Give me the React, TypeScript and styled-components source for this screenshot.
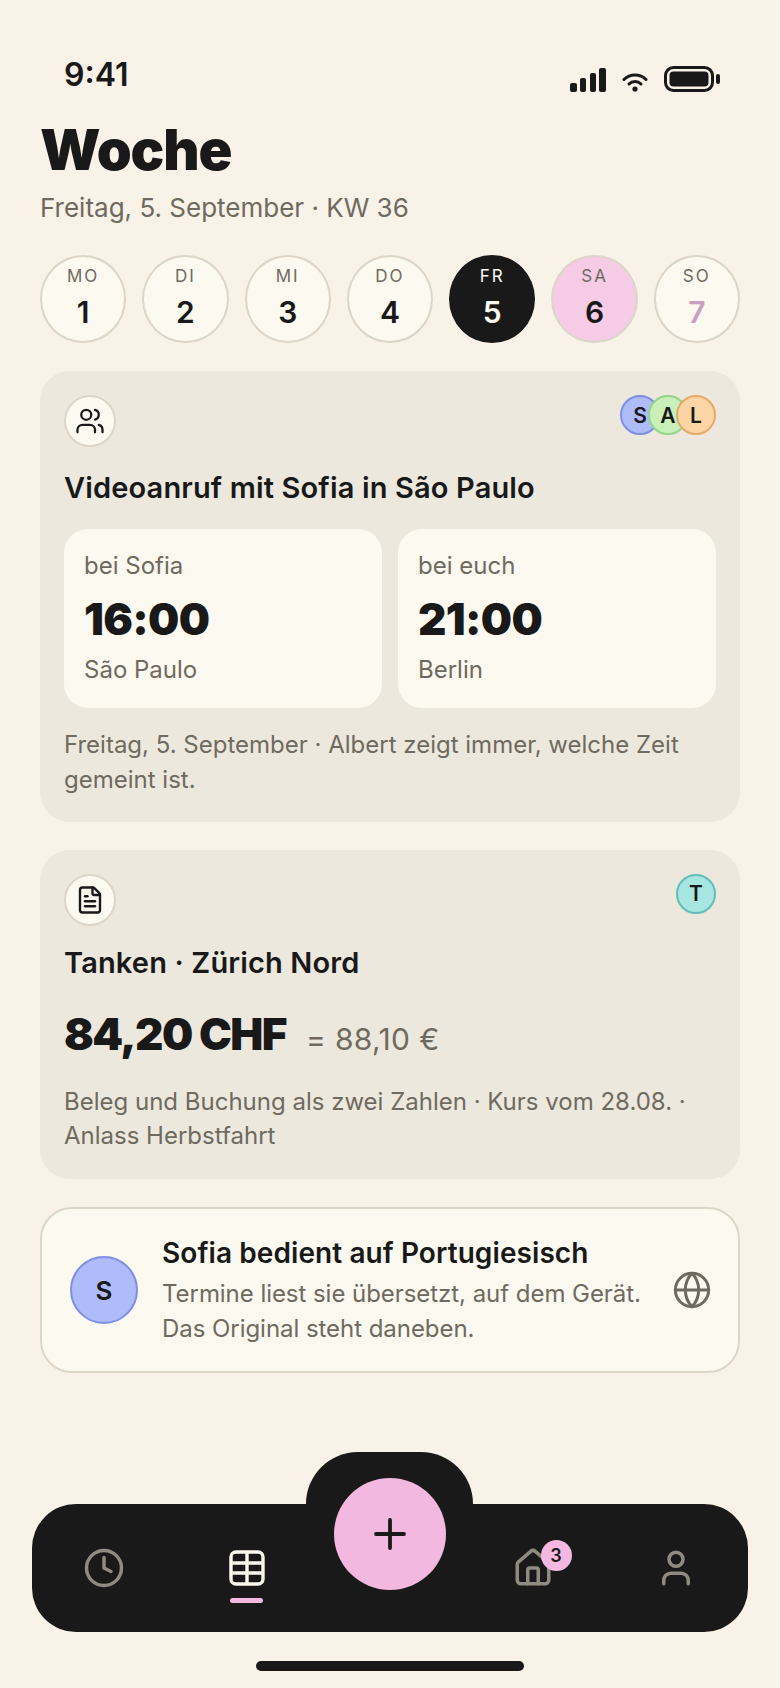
import React from "react";
import styled, { createGlobalStyle } from "styled-components";
import { Users, FileText, Globe, Clock, House, User, Plus } from "lucide-react";

const Global = createGlobalStyle`
  html, body { margin: 0; padding: 0; background: #f8f2e8; }
  * { box-sizing: border-box; }
  body { font-family: Inter, "Noto Sans", sans-serif; color: #191919; }
`;

const Page = styled.div`
  width: 780px;
  height: 1688px;
  background: #f8f2e8;
  display: flex;
  flex-direction: column;
  overflow: hidden;
`;

const StatusBar = styled.div`
  height: 118px;
  padding: 57px 60px 0 64px;
  display: flex;
  justify-content: space-between;
  align-items: flex-start;
`;

const Clocktime = styled.div`
  font-size: 32px;
  line-height: 36px;
  font-weight: 600;
`;

const StatusIcons = styled.div`
  display: flex;
  align-items: flex-end;
  gap: 16px;
  padding-top: 9px;
`;

const Content = styled.main`
  padding: 0 40px;
  display: flex;
  flex-direction: column;
`;

const Title = styled.h1`
  margin: 0;
  font-size: 56px;
  line-height: 64px;
  font-weight: 900;
  letter-spacing: -0.02em;
`;

const Subtitle = styled.div`
  margin-top: 9px;
  font-size: 26px;
  line-height: 34px;
  color: #6f6a60;
`;

const Week = styled.div`
  margin-top: 30px;
  display: grid;
  grid-template-columns: repeat(7, 1fr);
  gap: 16px;
`;

const dayBg = { plain: "#fbf9f0", today: "#191919", weekend: "#f5cbe6" };

const Day = styled.div<{ $kind: keyof typeof dayBg }>`
  height: 88px;
  border-radius: 50%;
  background: ${(p) => dayBg[p.$kind]};
  border: 2px solid ${(p) => (p.$kind === "today" ? "#191919" : "#dcd6c9")};
  display: flex;
  flex-direction: column;
  align-items: center;
  padding-top: 7px;
`;

const DayName = styled.span<{ $light?: boolean }>`
  font-size: 17px;
  line-height: 24px;
  letter-spacing: 0.12em;
  color: ${(p) => (p.$light ? "#fbf9f0" : "#6f6a60")};
`;

const DayNum = styled.span<{ $color?: string }>`
  font-size: 30px;
  line-height: 36px;
  margin-top: 6px;
  font-weight: 600;
  color: ${(p) => p.$color || "#191919"};
`;

const Card = styled.section<{ $mt: number; $pb: number }>`
  margin-top: ${(p) => p.$mt}px;
  padding: 24px 24px ${(p) => p.$pb}px;
  background: #ece8de;
  border-radius: 30px;
`;

const CardTop = styled.div`
  display: flex;
  justify-content: space-between;
  align-items: flex-start;
`;

const IconBubble = styled.div`
  width: 52px;
  height: 52px;
  border-radius: 50%;
  background: #fbf9f0;
  border: 2px solid #dcd6c9;
  display: flex;
  align-items: center;
  justify-content: center;
`;

const Avatars = styled.div`
  display: flex;
`;

const Avatar = styled.div<{ $bg: string; $line: string; $size?: number; $font?: number }>`
  width: ${(p) => p.$size || 40}px;
  height: ${(p) => p.$size || 40}px;
  border-radius: 50%;
  background: ${(p) => p.$bg};
  border: 2px solid ${(p) => p.$line};
  display: flex;
  align-items: center;
  justify-content: center;
  font-size: ${(p) => p.$font || 21}px;
  font-weight: 600;
  flex: none;
  & + & { margin-left: -12px; }
`;

const CardTitle = styled.h2<{ $mt: number }>`
  margin: ${(p) => p.$mt}px 0 0;
  font-size: 29px;
  line-height: 36px;
  font-weight: 600;
  letter-spacing: 0.005em;
`;

const Times = styled.div`
  margin-top: 23px;
  display: grid;
  grid-template-columns: 1fr 1fr;
  gap: 16px;
`;

const TimeBox = styled.div`
  height: 179px;
  background: #fbf9f0;
  border-radius: 24px;
  padding: 21px 20px 0;
  color: #6f6a60;
  font-size: 24px;
  line-height: 32px;
`;

const Big = styled.div`
  margin: 11px 0 9px;
  font-size: 44px;
  line-height: 52px;
  font-weight: 900;
  letter-spacing: -0.015em;
  color: #191919;
`;

const Note = styled.p<{ $mt: number }>`
  margin: ${(p) => p.$mt}px 0 0;
  font-size: 24px;
  line-height: 34.8px;
  color: #6f6a60;
`;

const AmountRow = styled.div`
  margin-top: 24px;
  display: flex;
  align-items: baseline;
  gap: 20px;
`;

const Amount = styled.span`
  font-size: 44px;
  line-height: 58px;
  font-weight: 900;
  letter-spacing: -0.035em;
`;

const Converted = styled.span`
  font-size: 30px;
  letter-spacing: 0.012em;
  color: #6f6a60;
`;

const InfoCard = styled.section`
  margin-top: 28px;
  height: 166px;
  background: #fbf9f0;
  border: 2px solid #dcd6c9;
  border-radius: 32px;
  padding: 0 26px 0 28px;
  display: flex;
  align-items: center;
  gap: 24px;
`;

const InfoBody = styled.div`
  flex: 1;
  padding-top: 1px;
`;

const InfoTitle = styled.div`
  font-size: 28px;
  line-height: 36px;
  font-weight: 600;
  letter-spacing: 0.003em;
`;

const InfoText = styled.div`
  margin-top: 6px;
  font-size: 24px;
  line-height: 34.8px;
  letter-spacing: -0.002em;
  color: #6f6a60;
`;

const Dock = styled.nav`
  position: relative;
  margin: auto 32px 0;
  height: 128px;
  background: #191919;
  border-radius: 44px;
  display: grid;
  grid-template-columns: repeat(5, 1fr);

  &::before {
    content: "";
    position: absolute;
    left: 274px;
    top: -52px;
    width: 167px;
    height: 60px;
    background: #191919;
    border-radius: 52px 52px 0 0;
  }
`;

const Tab = styled.div`
  position: relative;
  display: flex;
  justify-content: center;
  padding-top: 43px;
`;

const TabMark = styled.div`
  position: absolute;
  top: 94px;
  left: 55px;
  width: 33px;
  height: 5px;
  border-radius: 3px;
  background: #f2b8e0;
`;

const Fab = styled.div`
  position: absolute;
  left: 302px;
  top: -26px;
  width: 112px;
  height: 112px;
  border-radius: 50%;
  background: #f2b8e0;
  display: flex;
  align-items: center;
  justify-content: center;
`;

const Badge = styled.div`
  position: absolute;
  left: 79px;
  top: 36px;
  width: 31px;
  height: 31px;
  border-radius: 50%;
  background: #f2b8e0;
  color: #191919;
  display: flex;
  align-items: center;
  justify-content: center;
  font-size: 18px;
  font-weight: 600;
`;

const HomeBar = styled.div`
  width: 268px;
  height: 10px;
  margin: 29px auto 17px;
  border-radius: 5px;
  background: #191919;
  flex: none;
`;

const days = [
  ["MO", 1], ["DI", 2], ["MI", 3], ["DO", 4], ["FR", 5], ["SA", 6], ["SO", 7],
] as const;

const idle = "#8f8b82";

export default function App() {
  return (
    <Page>
      <Global />
      <StatusBar>
        <Clocktime>9:41</Clocktime>
        <StatusIcons>
          <svg width="36" height="24" viewBox="0 0 36 24" fill="#191919">
            <rect x="0" y="15" width="7" height="9" rx="2" />
            <rect x="10" y="10" width="6" height="14" rx="2" />
            <rect x="20" y="5" width="6" height="19" rx="2" />
            <rect x="29" y="0" width="7" height="24" rx="2" />
          </svg>
          <svg width="26" height="20" viewBox="0 0 26 20" fill="none" stroke="#191919" strokeWidth="3" strokeLinecap="round">
            <path d="M2 7.5a15.5 15.5 0 0 1 22 0" />
            <path d="M7 12a8.5 8.5 0 0 1 12 0" />
            <circle cx="13" cy="17" r="2.6" fill="#191919" stroke="none" />
          </svg>
          <svg width="56" height="26" viewBox="0 0 56 26" fill="none">
            <rect x="1.5" y="1.5" width="47" height="23" rx="8" stroke="#191919" strokeWidth="3" />
            <rect x="5.5" y="5.5" width="39" height="15" rx="4" fill="#191919" />
            <rect x="52" y="8" width="4" height="10" rx="2" fill="#191919" />
          </svg>
        </StatusIcons>
      </StatusBar>

      <Content>
        <Title>Woche</Title>
        <Subtitle>Freitag, 5. September · KW 36</Subtitle>

        <Week>
          {days.map(([name, num]) => {
            const kind = num === 5 ? "today" : num === 6 ? "weekend" : "plain";
            return (
              <Day key={name} $kind={kind}>
                <DayName $light={num === 5}>{name}</DayName>
                <DayNum $color={num === 5 ? "#fbf9f0" : num === 7 ? "#c9a0c0" : undefined}>{num}</DayNum>
              </Day>
            );
          })}
        </Week>

        <Card $mt={28} $pb={24}>
          <CardTop>
            <IconBubble>
              <Users size={30} strokeWidth={1.8} color="#191919" />
            </IconBubble>
            <Avatars>
              <Avatar $bg="#aebcfb" $line="#7f8fe6">S</Avatar>
              <Avatar $bg="#c9f0b8" $line="#97d488">A</Avatar>
              <Avatar $bg="#fdd5a5" $line="#e5a968">L</Avatar>
            </Avatars>
          </CardTop>
          <CardTitle $mt={23}>Videoanruf mit Sofia in São Paulo</CardTitle>
          <Times>
            <TimeBox>
              bei Sofia
              <Big>16:00</Big>
              São Paulo
            </TimeBox>
            <TimeBox>
              bei euch
              <Big>21:00</Big>
              Berlin
            </TimeBox>
          </Times>
          <Note $mt={20}>Freitag, 5. September · Albert zeigt immer, welche Zeit gemeint ist.</Note>
        </Card>

        <Card $mt={28} $pb={25}>
          <CardTop>
            <IconBubble>
              <FileText size={30} strokeWidth={1.9} color="#191919" />
            </IconBubble>
            <Avatar $bg="#a8e6e2" $line="#62bdb8">T</Avatar>
          </CardTop>
          <CardTitle $mt={19}>Tanken · Zürich Nord</CardTitle>
          <AmountRow>
            <Amount>84,20 CHF</Amount>
            <Converted>= 88,10 €</Converted>
          </AmountRow>
          <Note $mt={22}>Beleg und Buchung als zwei Zahlen · Kurs vom 28.08. · Anlass Herbstfahrt</Note>
        </Card>

        <InfoCard>
          <Avatar $bg="#aebcfb" $line="#7f8fe6" $size={68} $font={26}>S</Avatar>
          <InfoBody>
            <InfoTitle>Sofia bedient auf Portugiesisch</InfoTitle>
            <InfoText>
              Termine liest sie übersetzt, auf dem Gerät.
              <br />
              Das Original steht daneben.
            </InfoText>
          </InfoBody>
          <Globe size={40} strokeWidth={1.8} color="#6f6a60" />
        </InfoCard>
      </Content>

      <Dock>
        <Tab>
          <Clock size={42} strokeWidth={2} color={idle} />
        </Tab>
        <Tab>
          <svg width="42" height="42" viewBox="0 0 42 42" fill="none" stroke="#fbf9f0" strokeWidth="3.4">
            <rect x="5" y="5" width="32" height="32" rx="5" />
            <path d="M5 16h32M5 26h32M21 5v32" />
          </svg>
          <TabMark />
        </Tab>
        <Tab />
        <Tab>
          <House size={42} strokeWidth={2} color={idle} />
          <Badge>3</Badge>
        </Tab>
        <Tab>
          <User size={42} strokeWidth={2} color={idle} />
        </Tab>
        <Fab>
          <Plus size={48} strokeWidth={1.9} color="#191919" />
        </Fab>
      </Dock>
      <HomeBar />
    </Page>
  );
}
